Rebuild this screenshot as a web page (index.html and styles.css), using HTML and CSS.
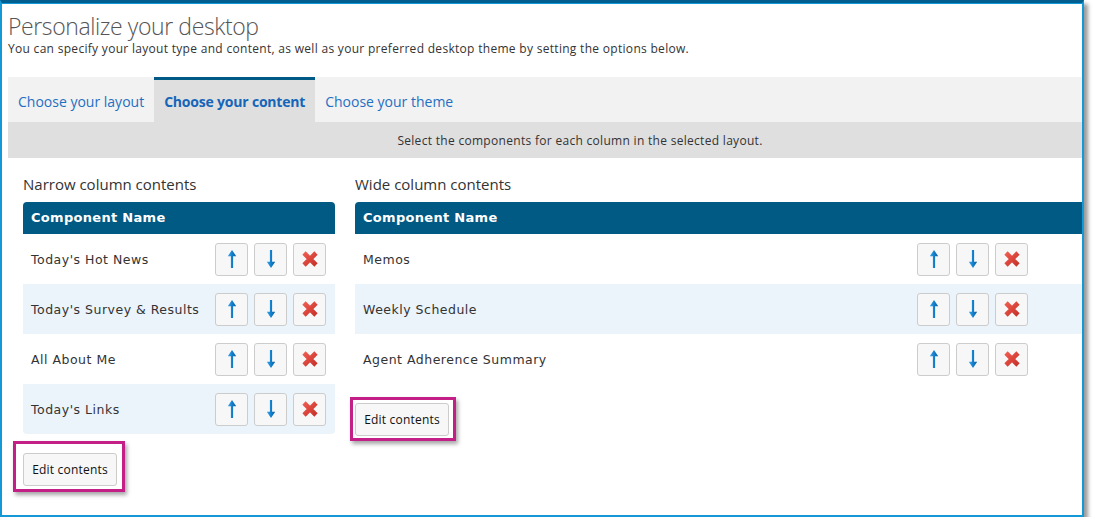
FILE: index.html
```html
<!DOCTYPE html>
<html lang="en">

<head>
    <meta charset="UTF-8">
    <meta name="viewport" content="width=device-width, initial-scale=1.0">
    <title>Personalize your desktop</title>
    <link rel="stylesheet" href="styles.css">
</head>

<body>

    <!-- shared gradients for the row icons -->
    <svg class="icon-defs" width="0" height="0" aria-hidden="true">
        <defs>
            <linearGradient id="arrowBlue" x1="0" y1="0" x2="1" y2="0">
                <stop offset="0" stop-color="#3fa6ea" />
                <stop offset="0.5" stop-color="#1380cc" />
                <stop offset="1" stop-color="#0a5c9c" />
            </linearGradient>
            <linearGradient id="crossRed" x1="0" y1="0" x2="1" y2="1">
                <stop offset="0" stop-color="#ee5b4f" />
                <stop offset="1" stop-color="#c7322a" />
            </linearGradient>
        </defs>
    </svg>

    <div class="frame">
        <div class="page">
            <h1 class="title">Personalize your desktop</h1>
            <p class="intro">You can specify your layout type and content, as well as your preferred desktop theme by setting the options below.</p>

            <div class="tabs">
                <a href="#" class="tab">Choose your layout</a>
                <a href="#" class="tab active">Choose your content</a>
                <a href="#" class="tab">Choose your theme</a>
            </div>
            <div class="hint">Select the components for each column in the selected layout.</div>

            <div class="columns">
                <div class="column narrow">
                    <h2>Narrow column contents</h2>
                    <div class="grid">
                        <div class="grid-head">Component Name</div>
                        <div class="grid-body">
                            <div class="grid-row">
                                <span class="name">Today's Hot News</span>
                                <span class="actions">
                                    <button class="move-btn" title="Move up"><svg width="10" height="18" viewBox="0 0 10 18"><path d="M5 0 L9.2 6.2 H6.1 V18 H3.9 V6.2 H0.8 Z" fill="url(#arrowBlue)" /></svg></button>
                                    <button class="move-btn" title="Move down"><svg width="10" height="18" viewBox="0 0 10 18"><path d="M5 18 L9.2 11.8 H6.1 V0 H3.9 V11.8 H0.8 Z" fill="url(#arrowBlue)" /></svg></button>
                                    <button class="move-btn" title="Remove"><svg width="16" height="16" viewBox="0 0 16 16"><path d="M2 2 L14 14 M14 2 L2 14" stroke="url(#crossRed)" stroke-width="4.6" /></svg></button>
                                </span>
                            </div>
                            <div class="grid-row">
                                <span class="name">Today's Survey &amp; Results</span>
                                <span class="actions">
                                    <button class="move-btn" title="Move up"><svg width="10" height="18" viewBox="0 0 10 18"><path d="M5 0 L9.2 6.2 H6.1 V18 H3.9 V6.2 H0.8 Z" fill="url(#arrowBlue)" /></svg></button>
                                    <button class="move-btn" title="Move down"><svg width="10" height="18" viewBox="0 0 10 18"><path d="M5 18 L9.2 11.8 H6.1 V0 H3.9 V11.8 H0.8 Z" fill="url(#arrowBlue)" /></svg></button>
                                    <button class="move-btn" title="Remove"><svg width="16" height="16" viewBox="0 0 16 16"><path d="M2 2 L14 14 M14 2 L2 14" stroke="url(#crossRed)" stroke-width="4.6" /></svg></button>
                                </span>
                            </div>
                            <div class="grid-row">
                                <span class="name">All About Me</span>
                                <span class="actions">
                                    <button class="move-btn" title="Move up"><svg width="10" height="18" viewBox="0 0 10 18"><path d="M5 0 L9.2 6.2 H6.1 V18 H3.9 V6.2 H0.8 Z" fill="url(#arrowBlue)" /></svg></button>
                                    <button class="move-btn" title="Move down"><svg width="10" height="18" viewBox="0 0 10 18"><path d="M5 18 L9.2 11.8 H6.1 V0 H3.9 V11.8 H0.8 Z" fill="url(#arrowBlue)" /></svg></button>
                                    <button class="move-btn" title="Remove"><svg width="16" height="16" viewBox="0 0 16 16"><path d="M2 2 L14 14 M14 2 L2 14" stroke="url(#crossRed)" stroke-width="4.6" /></svg></button>
                                </span>
                            </div>
                            <div class="grid-row">
                                <span class="name">Today's Links</span>
                                <span class="actions">
                                    <button class="move-btn" title="Move up"><svg width="10" height="18" viewBox="0 0 10 18"><path d="M5 0 L9.2 6.2 H6.1 V18 H3.9 V6.2 H0.8 Z" fill="url(#arrowBlue)" /></svg></button>
                                    <button class="move-btn" title="Move down"><svg width="10" height="18" viewBox="0 0 10 18"><path d="M5 18 L9.2 11.8 H6.1 V0 H3.9 V11.8 H0.8 Z" fill="url(#arrowBlue)" /></svg></button>
                                    <button class="move-btn" title="Remove"><svg width="16" height="16" viewBox="0 0 16 16"><path d="M2 2 L14 14 M14 2 L2 14" stroke="url(#crossRed)" stroke-width="4.6" /></svg></button>
                                </span>
                            </div>
                        </div>
                    </div>
                    <div class="edit-area">
                        <span class="callout callout-narrow"></span>
                        <button class="edit-btn">Edit contents</button>
                    </div>
                </div>

                <div class="column wide">
                    <h2>Wide column contents</h2>
                    <div class="grid">
                        <div class="grid-head">Component Name</div>
                        <div class="grid-body">
                            <div class="grid-row">
                                <span class="name">Memos</span>
                                <span class="actions">
                                    <button class="move-btn" title="Move up"><svg width="10" height="18" viewBox="0 0 10 18"><path d="M5 0 L9.2 6.2 H6.1 V18 H3.9 V6.2 H0.8 Z" fill="url(#arrowBlue)" /></svg></button>
                                    <button class="move-btn" title="Move down"><svg width="10" height="18" viewBox="0 0 10 18"><path d="M5 18 L9.2 11.8 H6.1 V0 H3.9 V11.8 H0.8 Z" fill="url(#arrowBlue)" /></svg></button>
                                    <button class="move-btn" title="Remove"><svg width="16" height="16" viewBox="0 0 16 16"><path d="M2 2 L14 14 M14 2 L2 14" stroke="url(#crossRed)" stroke-width="4.6" /></svg></button>
                                </span>
                            </div>
                            <div class="grid-row">
                                <span class="name">Weekly Schedule</span>
                                <span class="actions">
                                    <button class="move-btn" title="Move up"><svg width="10" height="18" viewBox="0 0 10 18"><path d="M5 0 L9.2 6.2 H6.1 V18 H3.9 V6.2 H0.8 Z" fill="url(#arrowBlue)" /></svg></button>
                                    <button class="move-btn" title="Move down"><svg width="10" height="18" viewBox="0 0 10 18"><path d="M5 18 L9.2 11.8 H6.1 V0 H3.9 V11.8 H0.8 Z" fill="url(#arrowBlue)" /></svg></button>
                                    <button class="move-btn" title="Remove"><svg width="16" height="16" viewBox="0 0 16 16"><path d="M2 2 L14 14 M14 2 L2 14" stroke="url(#crossRed)" stroke-width="4.6" /></svg></button>
                                </span>
                            </div>
                            <div class="grid-row">
                                <span class="name">Agent Adherence Summary</span>
                                <span class="actions">
                                    <button class="move-btn" title="Move up"><svg width="10" height="18" viewBox="0 0 10 18"><path d="M5 0 L9.2 6.2 H6.1 V18 H3.9 V6.2 H0.8 Z" fill="url(#arrowBlue)" /></svg></button>
                                    <button class="move-btn" title="Move down"><svg width="10" height="18" viewBox="0 0 10 18"><path d="M5 18 L9.2 11.8 H6.1 V0 H3.9 V11.8 H0.8 Z" fill="url(#arrowBlue)" /></svg></button>
                                    <button class="move-btn" title="Remove"><svg width="16" height="16" viewBox="0 0 16 16"><path d="M2 2 L14 14 M14 2 L2 14" stroke="url(#crossRed)" stroke-width="4.6" /></svg></button>
                                </span>
                            </div>
                        </div>
                    </div>
                    <div class="edit-area">
                        <span class="callout callout-wide"></span>
                        <button class="edit-btn">Edit contents</button>
                    </div>
                </div>
            </div>
        </div>
    </div>

</body>

</html>
```

FILE: styles.css
```css
body {
    margin: 0;
    background: #fff;
    font-family: "Open Sans", "Noto Sans", sans-serif;
    color: #333;
}

.icon-defs {
    position: absolute;
}

.frame {
    width: 1080px;
    height: 512px;
    border: 2px solid #1598d6;
    border-top: 3px solid #005f8f;
    box-shadow: 4px 4px 4px rgba(0, 0, 0, 0.4), inset 0 1px 0 #1598d6;
    overflow: hidden;
    background: #fff;
}

.page {
    width: 1144px;
    padding: 8px 0 0 6px;
}

.title {
    margin: 0;
    font-size: 23px;
    font-weight: 300;
    line-height: 30px;
    letter-spacing: -0.4px;
    color: #555;
}

.intro {
    margin: 0 0 20px;
    font-size: 12px;
    line-height: 16px;
    letter-spacing: 0.3px;
    color: #333;
}

/* tab strip */
.tabs {
    display: flex;
    height: 45px;
    background-color: #f2f2f2;
}

.tab {
    padding: 5px 10px 0;
    font-size: 14px;
    line-height: 40px;
    color: #1f6fc2;
    text-decoration: none;
}

.tab.active {
    padding-top: 2px;
    background-color: #dfdfdf;
    border-top: 3px solid #005a85;
    font-weight: 700;
    letter-spacing: -0.2px;
    color: #1565b8;
}

.hint {
    height: 34px;
    padding-top: 2px;
    line-height: 34px;
    background-color: #dfdfdf;
    text-align: center;
    font-size: 12px;
    letter-spacing: 0.3px;
    color: #333;
}

/* column editors */
.columns {
    display: flex;
    gap: 20px;
    padding: 16px 0 0 15px;
}

.column h2 {
    margin: 0 0 8px;
    font-size: 15px;
    font-weight: 400;
    line-height: 20px;
    color: #333;
}

.narrow {
    width: 312px;
}

.wide {
    width: 797px;
}

.grid {
    border-radius: 4px;
    overflow: hidden;
}

.grid-head {
    padding-left: 8px;
    height: 32px;
    line-height: 32px;
    background-color: #005a84;
    color: #fff;
    font-family: "DejaVu Sans", Verdana, sans-serif;
    font-size: 13px;
    font-weight: 700;
    letter-spacing: 0.3px;
}

.grid-row {
    display: flex;
    align-items: center;
    height: 50px;
    padding: 0 9px 0 8px;
    font-family: "DejaVu Sans", Verdana, sans-serif;
    font-size: 12.5px;
    letter-spacing: 0.5px;
    color: #333;
}

.grid-row .name {
    padding-top: 1px;
}

.grid-row:nth-child(even) {
    background-color: #ebf4fb;
}

.wide .grid-row {
    padding-right: 124px;
}

.grid-row .name {
    flex: 1;
}

.actions {
    display: flex;
    gap: 6px;
}

.move-btn {
    display: flex;
    align-items: center;
    justify-content: center;
    width: 33px;
    height: 33px;
    padding: 0;
    border: 1px solid #ccc;
    border-radius: 3px;
    background-color: #f7f7f7;
}

.edit-area {
    position: relative;
    width: 94px;
    margin-top: 19px;
}

.edit-btn {
    display: block;
    width: 94px;
    height: 33px;
    padding: 0;
    border: 1px solid #ccc;
    border-radius: 3px;
    background-color: #f7f7f7;
    font-family: "Open Sans", sans-serif;
    font-size: 12px;
    letter-spacing: 0.2px;
    color: #111;
}

/* magenta call-out boxes around the edit buttons */
.callout {
    position: absolute;
    border: 3px solid #c41e87;
    box-shadow: 2px 3px 4px rgba(0, 0, 0, 0.35);
    pointer-events: none;
}

.callout-narrow {
    left: -10px;
    top: -12px;
    right: -8px;
    bottom: -6px;
}

.callout-wide {
    left: -5px;
    top: -6px;
    right: -7px;
    bottom: -5px;
}
```
